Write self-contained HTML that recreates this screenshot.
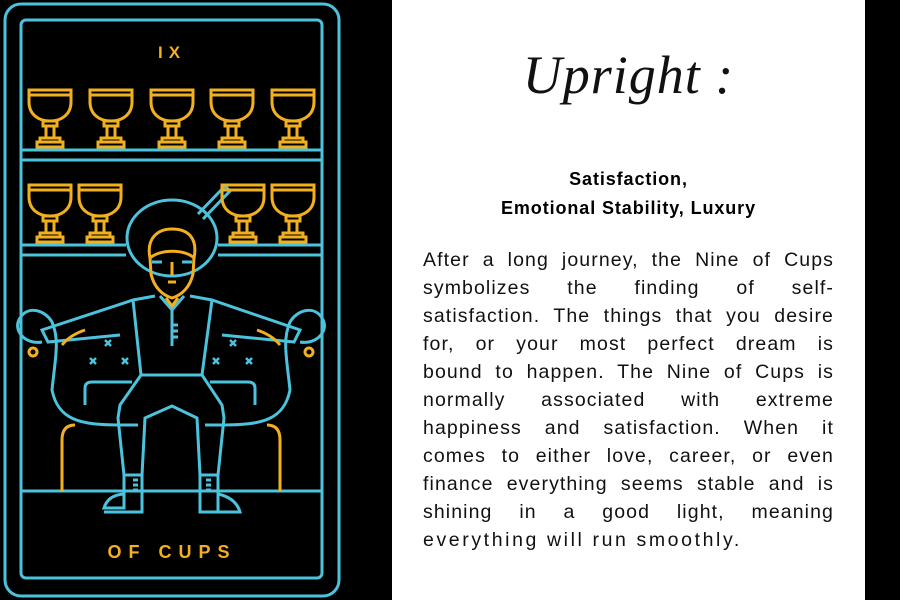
<!DOCTYPE html>
<html><head><meta charset="utf-8"><style>
html,body{margin:0;padding:0;width:900px;height:600px;overflow:hidden;background:#000}
.panel{position:absolute;left:392px;top:0;width:473px;height:600px;background:#fff}
.title{position:absolute;left:0;width:473px;top:44px;text-align:center;font:italic 54px "Liberation Serif",serif;color:#111;letter-spacing:1px}
.sub{position:absolute;left:0;width:473px;top:165px;text-align:center;font:bold 18px/29px "Liberation Sans",sans-serif;color:#000;letter-spacing:0.9px}
.para{position:absolute;left:423px;top:246px;width:411px;font:19.5px/28px "Liberation Sans",sans-serif;color:#111;letter-spacing:1.1px}
.para div{text-align:justify;text-align-last:justify;white-space:nowrap;height:28px}
.para div.l{text-align-last:left;letter-spacing:2.6px}
svg{position:absolute;left:0;top:0}
</style></head><body>
<svg width="392" height="600" viewBox="0 0 392 600">
<defs>
<g id="cup" fill="none" stroke="#f2b01e" stroke-width="3">
<path d="M-21,0 H21 V12 C21,24 12,31 0,31 C-12,31 -21,24 -21,12 Z"/>
<path d="M-21,5 H21"/>
<rect x="-7" y="31" width="14" height="5"/>
<path d="M-4,36 V48 M4,36 V48"/>
<rect x="-10" y="48" width="20" height="4"/>
<rect x="-13" y="52" width="26" height="5"/>
</g>
</defs>
<g fill="none" stroke="#4cc3dc" stroke-width="3">
<rect x="5" y="4" width="334" height="592" rx="16"/>
<rect x="21" y="20" width="301" height="558" rx="5"/>
<path d="M21,150 H322 M21,160 H322 M21,245 H126 M218,245 H322 M21,255 H126 M218,255 H322 M21,491 H322"/>
<ellipse cx="172" cy="238" rx="45" ry="38"/>
<path d="M198,214 L225,186 L230,191 L203,219"/>
<path d="M155,296 L133,300 L42,330 L48,342 L120,335 M190,296 L212,300 L300,330 L294,342 L222,335"/>
<path d="M133,300 L141,375 L202,375 L212,300"/>
<path d="M160,296 L172,310 L184,296 M172,310 V346 M172,325 H178 M172,331 H178 M172,337 H178"/>
<path d="M42,342 C25,345 12,330 20,318 C28,305 45,310 52,322 C60,340 55,360 52,390 C58,420 80,425 120,425 L138,425"/>
<path d="M300,342 C317,345 330,330 322,318 C314,305 297,310 290,322 C282,340 287,360 290,390 C284,420 262,425 222,425 L205,425"/>
<path d="M85,405 V388 Q85,382 92,382 H132 M255,405 V388 Q255,382 248,382 H210"/>
<path d="M141,375 L120,405 L118,418 L124,475 L142,475 L145,418 L172,406 L197,418 L200,475 L218,475 L224,418 L222,405 L202,375"/>
<path d="M124,475 V508 H104 Q108,495 124,494 M142,475 V512 H104 M200,475 V512 H240 Q236,498 218,494 M218,475 V512"/>
<path d="M133,480 H138 M133,485 H138 M133,490 H138 M206,480 H211 M206,485 H211 M206,490 H211"/>
<path d="M105,340 l6,6 m0,-6 l-6,6 M90,358 l6,6 m0,-6 l-6,6 M122,358 l6,6 m0,-6 l-6,6 M230,340 l6,6 m0,-6 l-6,6 M213,358 l6,6 m0,-6 l-6,6 M246,358 l6,6 m0,-6 l-6,6" stroke-width="2.5"/>
<path d="M152,262 H162 M182,262 H192" stroke-width="3"/>
</g>
<g fill="none" stroke="#f2b01e" stroke-width="3">
<circle cx="33" cy="352" r="4"/><circle cx="309" cy="352" r="4"/>
<path d="M62,345 Q70,335 85,330 M280,345 Q272,335 257,330"/>
<path d="M62,492 V440 Q62,425 75,425 M280,492 V440 Q280,425 267,425"/>
<path d="M150,258 C146,238 158,229 172,229 C188,229 198,238 194,258 L193,274 C190,287 182,295 172,298 C162,295 154,287 151,274 Z M150,258 C160,249 185,249 194,258"/>
<path d="M168,282 H176 M172,262 V276 M166,298 L172,306 L178,298"/>
</g>
<use href="#cup" x="50" y="90"/><use href="#cup" x="111" y="90"/><use href="#cup" x="172" y="90"/><use href="#cup" x="232" y="90"/><use href="#cup" x="293" y="90"/>
<use href="#cup" x="50" y="185"/><use href="#cup" x="100" y="185"/><use href="#cup" x="243" y="185"/><use href="#cup" x="293" y="185"/>
<text x="172" y="58" text-anchor="middle" font-family="Liberation Sans,sans-serif" font-weight="bold" font-size="17" fill="#f2b01e" letter-spacing="6">IX</text>
<text x="172" y="558" text-anchor="middle" font-family="Liberation Sans,sans-serif" font-weight="bold" font-size="18" fill="#f2b01e" letter-spacing="7">OF CUPS</text>
</svg>
<div class="panel">
<div class="title">Upright :</div>
<div class="sub">Satisfaction,<br>Emotional Stability, Luxury</div>
</div>
<div class="para">
<div>After a long journey, the Nine of Cups</div>
<div>symbolizes the finding of self-</div>
<div>satisfaction. The things that you desire</div>
<div>for, or your most perfect dream is</div>
<div>bound to happen. The Nine of Cups is</div>
<div>normally associated with extreme</div>
<div>happiness and satisfaction. When it</div>
<div>comes to either love, career, or even</div>
<div>finance everything seems stable and is</div>
<div>shining in a good light, meaning</div>
<div class="l">everything will run smoothly.</div>
</div>
</body></html>
